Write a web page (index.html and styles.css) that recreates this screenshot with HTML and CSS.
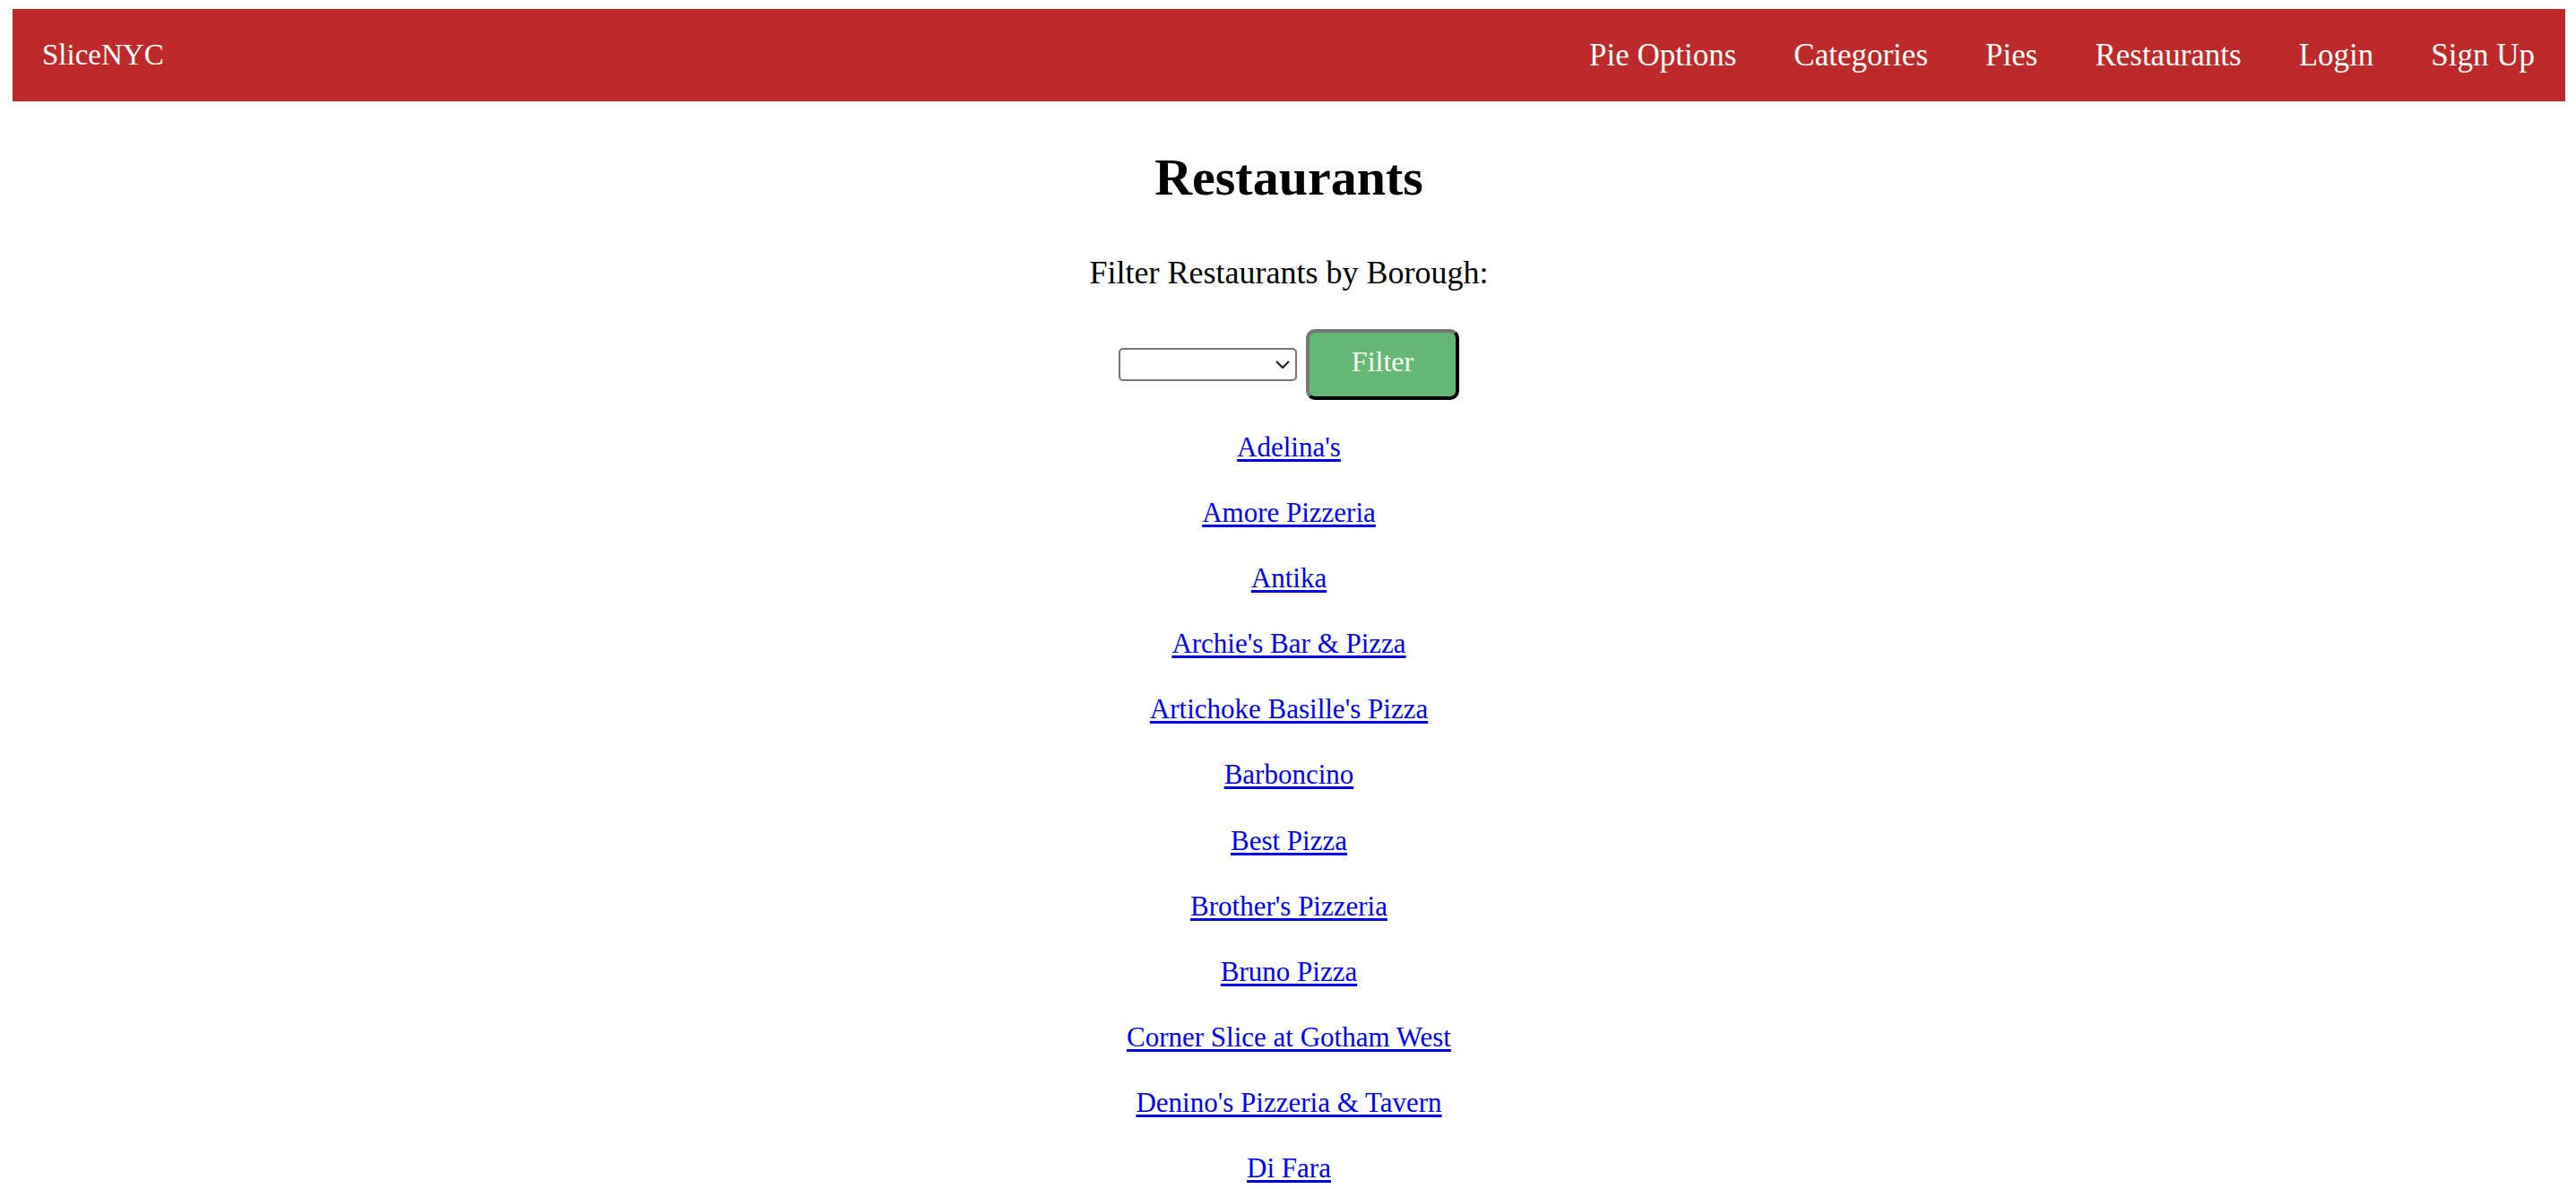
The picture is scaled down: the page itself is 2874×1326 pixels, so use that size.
FILE: index.html
```html
<!DOCTYPE html>
<html lang="en">
<head>
  <meta charset="UTF-8">
  <title>SliceNYC - Restaurants</title>
  <link rel="stylesheet" href="styles.css">
</head>
<body>
  <nav class="navbar">
    <a href="/" class="brand">SliceNYC</a>
    <div class="nav_links">
      <a href="/pie_options">Pie Options</a>
      <a href="/categories">Categories</a>
      <a href="/pies">Pies</a>
      <a href="/restaurants">Restaurants</a>
      <a href="/login">Login</a>
      <a href="/signup">Sign Up</a>
    </div>
  </nav>

  <div class="page">
    <h1 class="title">Restaurants</h1>
    <h3 class="subtitle">Filter Restaurants by Borough:</h3>

    <form class="filter_form">
      <div class="select_wrap">
        <select name="borough" class="borough_select">
          <option value=""></option>
          <option value="Manhattan">Manhattan</option>
          <option value="Brooklyn">Brooklyn</option>
          <option value="Queens">Queens</option>
          <option value="Bronx">Bronx</option>
          <option value="Staten Island">Staten Island</option>
        </select>
        <svg class="chevron" width="16" height="10" viewBox="0 0 16 10">
          <path d="M1 1 L8 8 L15 1" fill="none" stroke="#222" stroke-width="2.2"/>
        </svg>
      </div>
      <button type="submit" class="filter_btn">Filter</button>
    </form>

    <div class="restaurant_list">
      <a href="/restaurants/1">Adelina's</a>
      <a href="/restaurants/2">Amore Pizzeria</a>
      <a href="/restaurants/3">Antika</a>
      <a href="/restaurants/4">Archie's Bar &amp; Pizza</a>
      <a href="/restaurants/5">Artichoke Basille's Pizza</a>
      <a href="/restaurants/6">Barboncino</a>
      <a href="/restaurants/7">Best Pizza</a>
      <a href="/restaurants/8">Brother's Pizzeria</a>
      <a href="/restaurants/9">Bruno Pizza</a>
      <a href="/restaurants/10">Corner Slice at Gotham West</a>
      <a href="/restaurants/11">Denino's Pizzeria &amp; Tavern</a>
      <a href="/restaurants/12">Di Fara</a>
    </div>
  </div>
</body>
</html>
```

FILE: styles.css
```css
body {
	margin: 10px 12px 0 14px;
	font-family: "Liberation Serif", serif;
	background-color: white;
	color: black;
}

.navbar {
	height: 103px;
	display: flex;
	align-items: center;
	justify-content: space-between;
	padding: 0 34px 0 33px;
	background-color: #bd2a2b;
}

.navbar a {
	color: white;
	text-decoration: none;
}

.brand {
	font-size: 33px;
}

.nav_links {
	display: flex;
	gap: 64px;
	font-size: 35px;
}

.page {
	display: flex;
	flex-direction: column;
	align-items: center;
}

.title {
	margin: 50px 0 0;
	font-size: 58px;
	line-height: 70px;
	font-weight: bold;
}

.subtitle {
	margin: 49px 0 0;
	font-size: 36px;
	line-height: 44px;
	font-weight: normal;
}

.filter_form {
	display: flex;
	align-items: center;
	gap: 10px;
	margin-top: 41px;
}

.select_wrap {
	position: relative;
	display: flex;
}

.borough_select {
	appearance: none;
	-webkit-appearance: none;
	width: 199px;
	height: 37px;
	border: 2px solid #767676;
	border-radius: 5px;
	background-color: white;
	font-family: "Liberation Serif", serif;
	font-size: 24px;
	outline: none;
}

.chevron {
	position: absolute;
	right: 8px;
	top: 14px;
	pointer-events: none;
}

.filter_btn {
	width: 171px;
	height: 79px;
	box-sizing: border-box;
	padding: 12px 0 19px;
	border: 4px outset;
	border-color: #777777 #1f1f1f #1f1f1f #777777;
	border-radius: 10px;
	background-color: #65b874;
	color: white;
	font-family: "Liberation Serif", serif;
	font-size: 32px;
	line-height: 40px;
	cursor: pointer;
}

.restaurant_list {
	display: flex;
	flex-direction: column;
	align-items: center;
	gap: 33.1px;
	margin-top: 33px;
}

.restaurant_list a {
	font-size: 31px;
	line-height: 40px;
	color: #0000ee;
	text-decoration: underline;
	text-decoration-thickness: 3px;
	text-underline-offset: 3px;
}
```
